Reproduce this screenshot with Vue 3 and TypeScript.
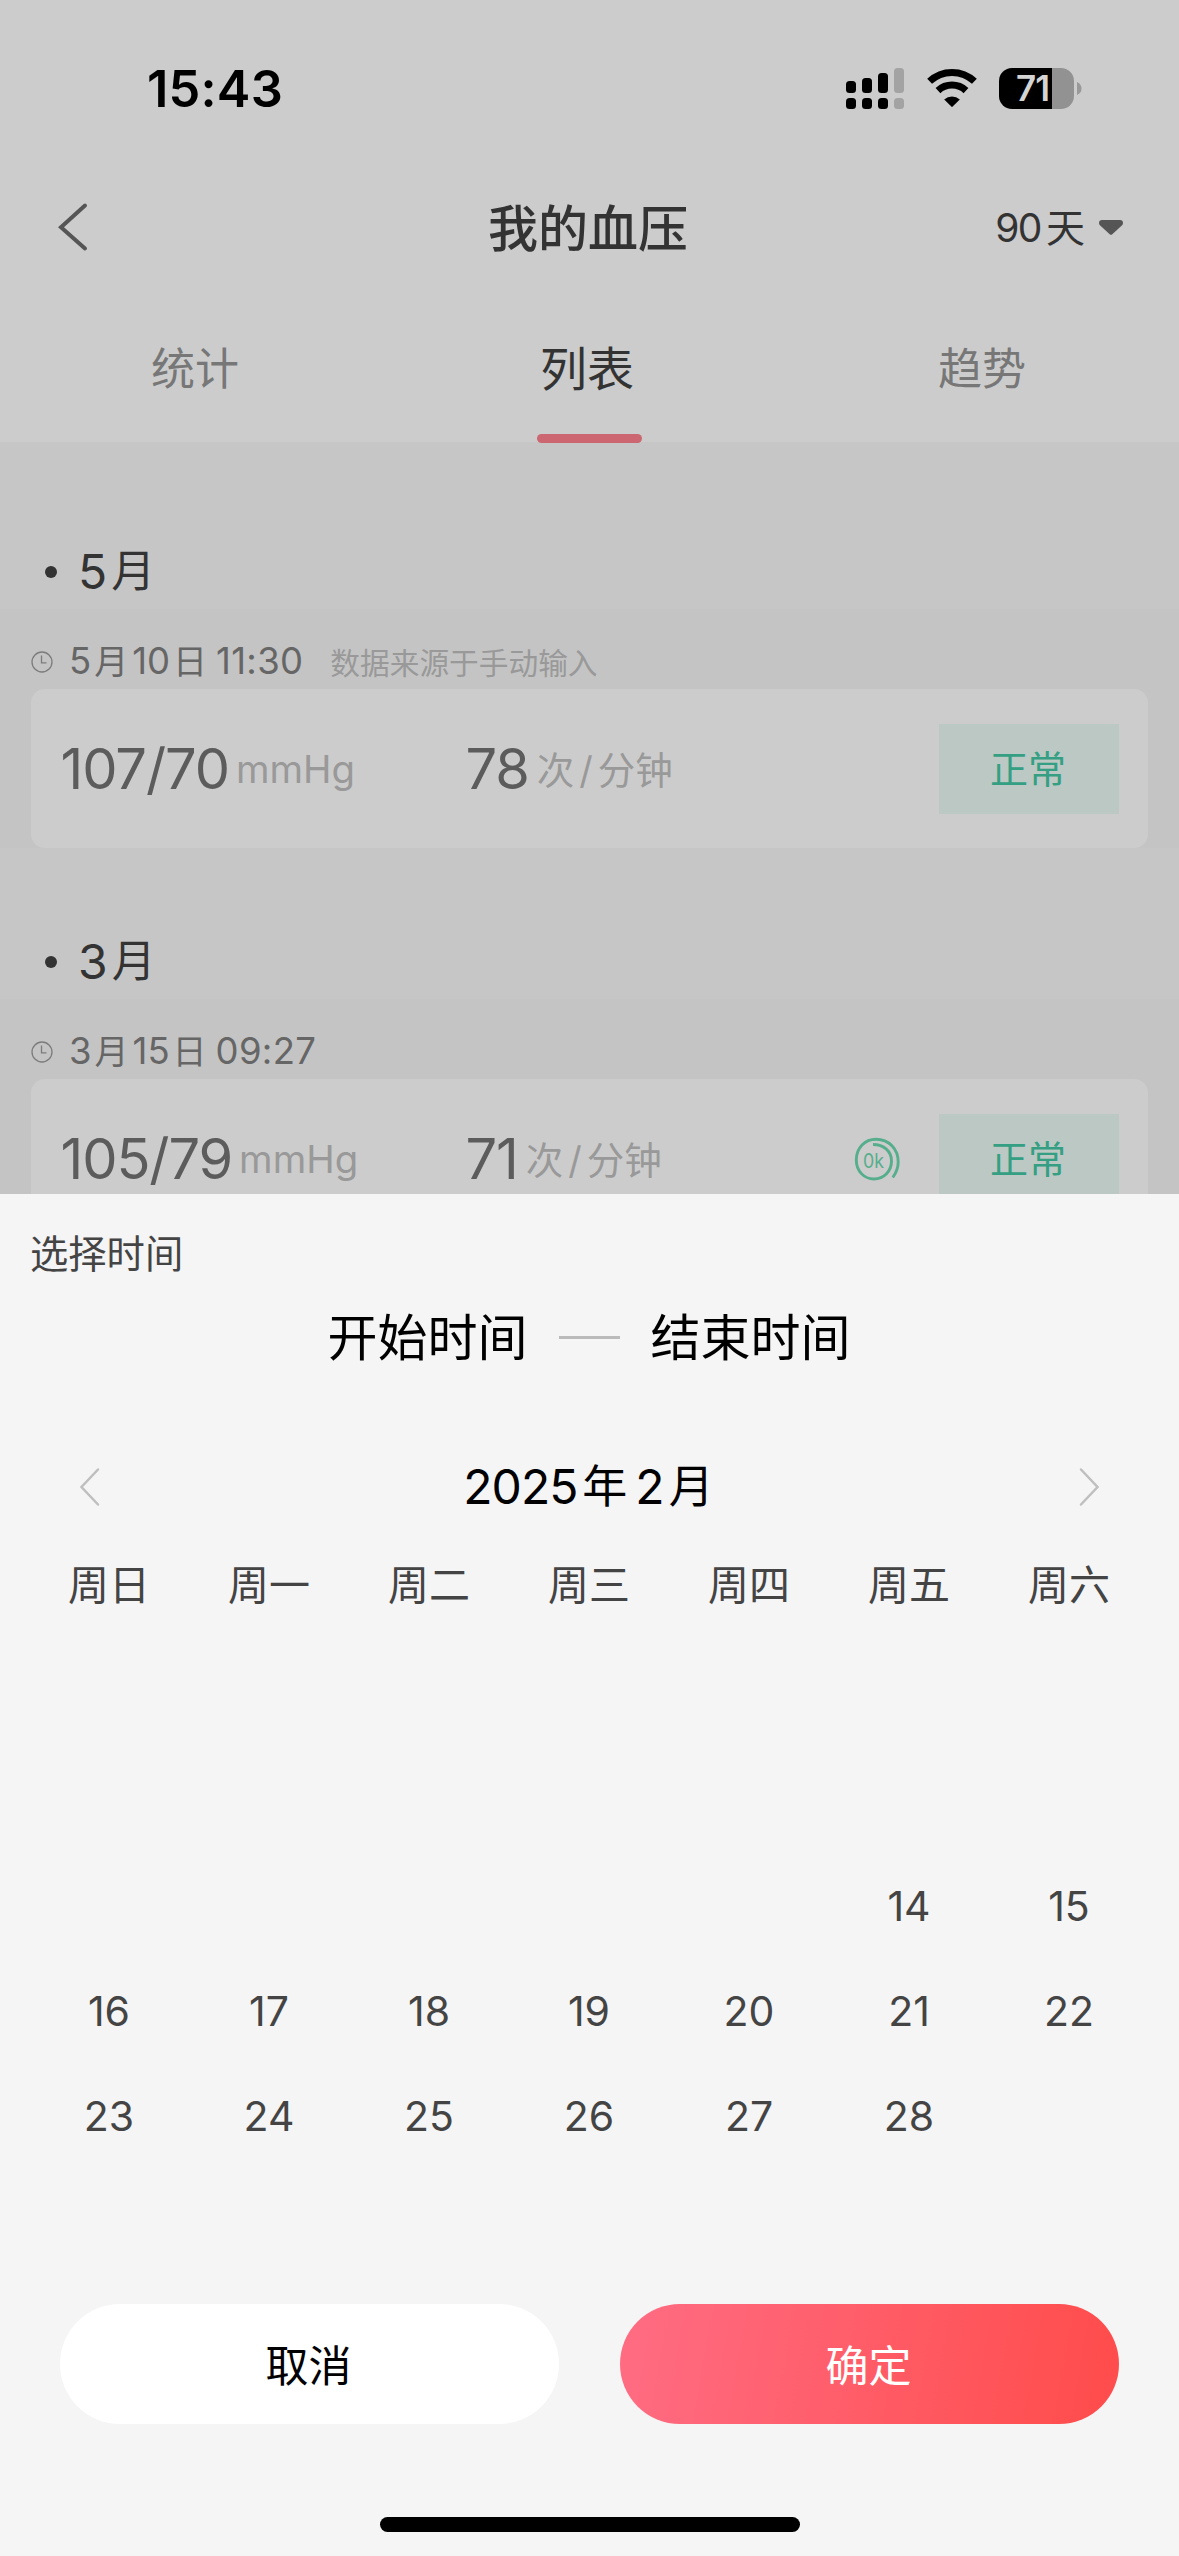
<script setup lang="ts">
interface Reading {
  month: string
  day: string
  time: string
  source: string
  pressure: string
  pulse: string
  verified: boolean
}

const readings: Reading[] = [
  { month: '5', day: '10', time: '11:30', source: '数据来源于手动输入', pressure: '107/70', pulse: '78', verified: false },
  { month: '3', day: '15', time: '09:27', source: '', pressure: '105/79', pulse: '71', verified: true },
]

const tabs: string[] = ['统计', '列表', '趋势']
const activeTab = 1

const weekdays: string[] = ['周日', '周一', '周二', '周三', '周四', '周五', '周六']
const firstVisibleDay = 14
const leadingBlanks = 6

// Five week rows; days before the first selectable one stay blank.
const cells: string[] = Array.from({ length: 35 }, (_, i) => {
  const day = i - leadingBlanks + 1
  return day >= firstVisibleDay && day <= 28 ? String(day) : ''
})
</script>

<template>
  <div class="screen">
    <div class="page">
      <div class="status">
        <span class="clock">15:43</span>
        <div class="indicators">
          <svg class="signal" width="58" height="41" viewBox="0 0 58 41">
            <g fill="#000">
              <rect x="0" y="13" width="10" height="12" rx="3.5" />
              <rect x="16" y="10" width="10" height="15" rx="3.5" />
              <rect x="32" y="5" width="10" height="20" rx="3.5" />
              <rect x="0" y="30" width="10" height="11" rx="3.5" />
              <rect x="16" y="30" width="10" height="11" rx="3.5" />
              <rect x="32" y="30" width="10" height="11" rx="3.5" />
            </g>
            <g fill="#a3a3a3">
              <rect x="48" y="0" width="10" height="25" rx="3.5" />
              <rect x="48" y="30" width="10" height="11" rx="3.5" />
            </g>
          </svg>
          <svg class="wifi" width="50" height="41" viewBox="0 0 50 41">
            <g fill="none" stroke="#000" stroke-width="7">
              <path d="M2.6 13.3A32.6 32.6 0 0 1 47.4 13.3" />
              <path d="M11 22.6A20.6 20.6 0 0 1 39 22.6" />
            </g>
            <path d="M17.2 31.4A12 12 0 0 1 32.8 31.4L25.7 38.6Q25 39.3 24.3 38.6Z" fill="#000" />
          </svg>
          <div class="battery">
            <div class="cell"><span>71</span></div>
            <svg width="5" height="13" viewBox="0 0 5 13"><path d="M0 0Q4.5 2 4.5 6.5T0 13Z" fill="#999" /></svg>
          </div>
        </div>
      </div>

      <div class="nav">
        <svg class="back" width="32" height="52" viewBox="0 0 32 52">
          <path d="M28 4.500L4 26.200L28 47.500" fill="none" stroke="#555" stroke-width="4" stroke-linecap="round" />
        </svg>
        <h1>我的血压</h1>
        <div class="period">
          <span class="n">90</span><span>天</span>
          <svg width="24" height="16" viewBox="0 0 24 16"><path d="M3 0H21Q24 0 24 3Q24 4.500 22.800 5.600L13.300 14.300Q12 15.400 10.700 14.300L1.200 5.600Q0 4.500 0 3Q0 0 3 0Z" fill="#555" /></svg>
        </div>
      </div>

      <div class="tabs">
        <div v-for="(tab, i) in tabs" :key="tab" class="tab" :class="{ active: i === activeTab }">{{ tab }}</div>
      </div>

      <div class="list">
        <section v-for="r in readings" :key="r.month">
          <h2><i></i><span>{{ r.month }}</span><b>月</b></h2>
          <div class="group">
            <div class="when">
              <svg width="22" height="22" viewBox="0 0 22 22" fill="none" stroke="#7c7c7c" stroke-width="1.3">
                <circle cx="11" cy="11" r="10" />
                <path d="M10.500 4.500V11.800H15.500" />
              </svg>
              <span class="date"><span>{{ r.month }}</span><b>月</b><span>{{ r.day }}</span><b>日</b><span class="time">{{ r.time }}</span></span>
              <span class="source">{{ r.source }}</span>
            </div>
            <div class="card">
              <div class="measure pressure"><strong>{{ r.pressure }}</strong><small>mmHg</small></div>
              <div class="measure pulse"><strong>{{ r.pulse }}</strong><small>次<em>/</em>分钟</small></div>
              <svg v-if="r.verified" class="ok" width="46" height="46" viewBox="0 0 46 46">
                <path d="M19 8.500C30 8.500 37.500 15.500 37.500 25C37.500 35 30 43 20 43C10 43 2.300 35 2.300 24C2.300 12 11 3.200 22 3.200C35 3.200 44.200 13 44.200 26C44.200 32 42 37 38.800 41.500" fill="none" stroke="#57ae8d" stroke-width="2.900" />
                <text x="19.500" y="32" text-anchor="middle" textLength="21" lengthAdjust="spacingAndGlyphs">0k</text>
              </svg>
              <div class="badge">正常</div>
            </div>
          </div>
        </section>
      </div>
    </div>

    <div class="sheet">
      <div class="sheet-title">选择时间</div>
      <div class="range"><span>开始时间</span><i></i><span>结束时间</span></div>
      <div class="month">
        <svg width="22" height="40" viewBox="0 0 22 40"><path d="M19 2.500L2.500 20L19 37.500" /></svg>
        <div class="month-name"><span>2025</span><b>年</b><span>2</span><b>月</b></div>
        <svg width="22" height="40" viewBox="0 0 22 40"><path d="M3 2.500L19.500 20L3 37.500" /></svg>
      </div>
      <div class="week">
        <span v-for="w in weekdays" :key="w">{{ w }}</span>
      </div>
      <div class="days">
        <span v-for="(c, i) in cells" :key="i">{{ c }}</span>
      </div>
      <div class="actions">
        <button class="cancel">取消</button>
        <button class="confirm">确定</button>
      </div>
      <div class="home"></div>
    </div>
  </div>
</template>

<style>
body {
  margin: 0;
}
</style>

<style scoped>
.screen {
  width: 1179px;
  height: 2556px;
  overflow: hidden;
  font-family: Inter, "Noto Sans CJK SC", sans-serif;
  background: #f5f5f5;
}
.screen * {
  box-sizing: border-box;
}
svg {
  display: block;
  flex: none;
}
b,
em,
i {
  font-weight: inherit;
  font-style: normal;
}
.page {
  height: 1194px;
  overflow: hidden;
  background: #ccc;
}
.status {
  height: 176px;
  padding: 0 97px 0 147px;
  display: flex;
  align-items: center;
  justify-content: space-between;
}
.clock {
  font-size: 50.5px;
  font-weight: 600;
  letter-spacing: 0.2px;
}
.indicators {
  display: flex;
  align-items: center;
}
.wifi {
  margin-left: 23px;
}
.battery {
  margin-left: 22px;
  display: flex;
  align-items: center;
  gap: 3px;
}
.cell {
  width: 75px;
  height: 41px;
  border-radius: 13px;
  background: linear-gradient(90deg, #000 53px, #929292 53px);
  padding-left: 17px;
}
.cell span {
  font-size: 35px;
  line-height: 41px;
  font-weight: 600;
  letter-spacing: -1px;
  color: #d4d4d4;
}
.nav {
  height: 102px;
  display: grid;
  grid-template-columns: 299px 1fr 302px;
  align-items: center;
  color: #333;
}
.back {
  margin-left: 57px;
}
h1 {
  margin: 0;
  padding-top: 3px;
  text-align: center;
  font-size: 50px;
  line-height: 70px;
  font-weight: 500;
}
.period {
  display: flex;
  align-items: center;
  justify-content: flex-end;
  padding: 1px 56px 0 0;
  font-size: 39px;
  line-height: 60px;
}
.period .n {
  margin-right: 5px;
  letter-spacing: -1.5px;
}
.period svg {
  margin-left: 14px;
}
.tabs {
  height: 164px;
  display: grid;
  grid-template-columns: repeat(3, 1fr);
}
.tab {
  position: relative;
  padding: 46px 3px 0 0;
  text-align: center;
  font-size: 44px;
  line-height: 90px;
  color: #777;
}
.tab:last-child {
  padding-right: 1px;
}
.tab.active {
  font-size: 47px;
  padding-right: 5px;
  color: #333;
}
.tab.active::after {
  content: "";
  position: absolute;
  left: 144px;
  bottom: -1px;
  width: 105px;
  height: 9px;
  border-radius: 5px;
  background: #cc6670;
}
.list {
  padding-top: 16px;
  background: #c6c6c6;
}
h2 {
  margin: 0;
  padding: 76px 0 0 45px;
  height: 151px;
  display: flex;
  align-items: center;
  font-size: 48px;
  line-height: 75px;
  font-weight: 400;
  color: #333;
}
h2 i {
  width: 12px;
  height: 12px;
  border-radius: 50%;
  background: #333;
}
h2 span {
  margin-left: 21px;
}
h2 b {
  font-size: 44px;
  margin-left: 4px;
}
.group {
  padding: 25px 31px 0;
  background: #c4c4c4;
}
.when {
  height: 55px;
  display: flex;
  align-items: center;
}
.date {
  margin-left: 16px;
  font-size: 36.5px;
  line-height: 55px;
  color: #666;
  white-space: nowrap;
}
.date b {
  font-size: 34px;
  margin: 0 4px 0 3px;
}
.date .time {
  margin-left: 5px;
  letter-spacing: 0.3px;
}
.source {
  margin-left: 27px;
  margin-top: -1px;
  font-size: 29.7px;
  color: #999;
}
.card {
  height: 159px;
  padding: 0 29px 0 29.500px;
  border-radius: 14px;
  background: #ccc;
  display: flex;
  align-items: center;
}
.measure {
  display: flex;
  align-items: center;
  white-space: nowrap;
}
.pressure {
  width: 405px;
}
strong {
  font-size: 56px;
  font-weight: 400;
  letter-spacing: -1.1px;
  color: #5c5c5c;
}
small {
  margin-left: 7px;
  font-size: 38.3px;
  color: #999;
}
.pulse small {
  margin-top: -3px;
  margin-left: 8px;
  font-size: 37.5px;
}
small em {
  margin: 0 5px;
}
.ok {
  margin-left: auto;
  margin-right: 39px;
}
.ok text {
  font-family: Inter, sans-serif;
  font-size: 20px;
  fill: #57ae8d;
}
.badge {
  margin-left: auto;
  width: 180px;
  height: 90px;
  background: #bbc8c4;
  color: #349f82;
  text-align: center;
  font-size: 38px;
  line-height: 91px;
  padding-right: 2px;
}
.ok + .badge {
  margin-left: 0;
}
.sheet {
  height: 1362px;
  padding-top: 30px;
  background: #f5f5f5;
}
.sheet-title {
  padding-left: 30px;
  font-size: 38.3px;
  line-height: 61px;
  color: #444;
}
.range {
  height: 105px;
  padding-right: 1px;
  display: flex;
  align-items: center;
  justify-content: center;
  gap: 31px;
  font-size: 50px;
  line-height: 104px;
  color: #000;
}
.range i {
  width: 61px;
  height: 3px;
  background: #bbb;
}
.month {
  margin-top: 48px;
  height: 98px;
  padding: 0 79px;
  display: flex;
  align-items: center;
  justify-content: space-between;
}
.month svg path {
  fill: none;
  stroke: #bfbfbf;
  stroke-width: 2.5;
  stroke-linecap: round;
}
.month-name {
  display: flex;
  align-items: center;
  padding-right: 2px;
  font-size: 48px;
  line-height: 98px;
}
.month-name span:first-child {
  letter-spacing: -1px;
}
.month-name b {
  font-size: 45px;
  margin: 0 8px 0 5px;
}
.month-name b:last-child {
  margin: 0 0 0 4px;
}
.week,
.days {
  display: grid;
  grid-template-columns: repeat(7, 160px);
  padding-left: 29px;
  text-align: center;
  color: #444;
}
.week {
  font-size: 41px;
  line-height: 98px;
}
.days {
  margin-top: 10px;
  grid-auto-rows: 105px;
  font-size: 41px;
  line-height: 105px;
}
.actions {
  margin-top: 135px;
  padding: 0 60px;
  display: flex;
  gap: 61px;
}
.actions button {
  flex: 1;
  height: 120px;
  padding: 0 2px 2px 0;
  border: 0;
  border-radius: 60px;
  font: inherit;
  font-size: 43px;
  background: #fff;
  color: #000;
}
.actions .confirm {
  background: linear-gradient(100deg, #ff6b81 5%, #ff4d4d 95%);
  color: #fff;
}
.home {
  width: 420px;
  height: 15px;
  margin: 93px auto 0;
  border-radius: 8px;
  background: #000;
}
</style>
